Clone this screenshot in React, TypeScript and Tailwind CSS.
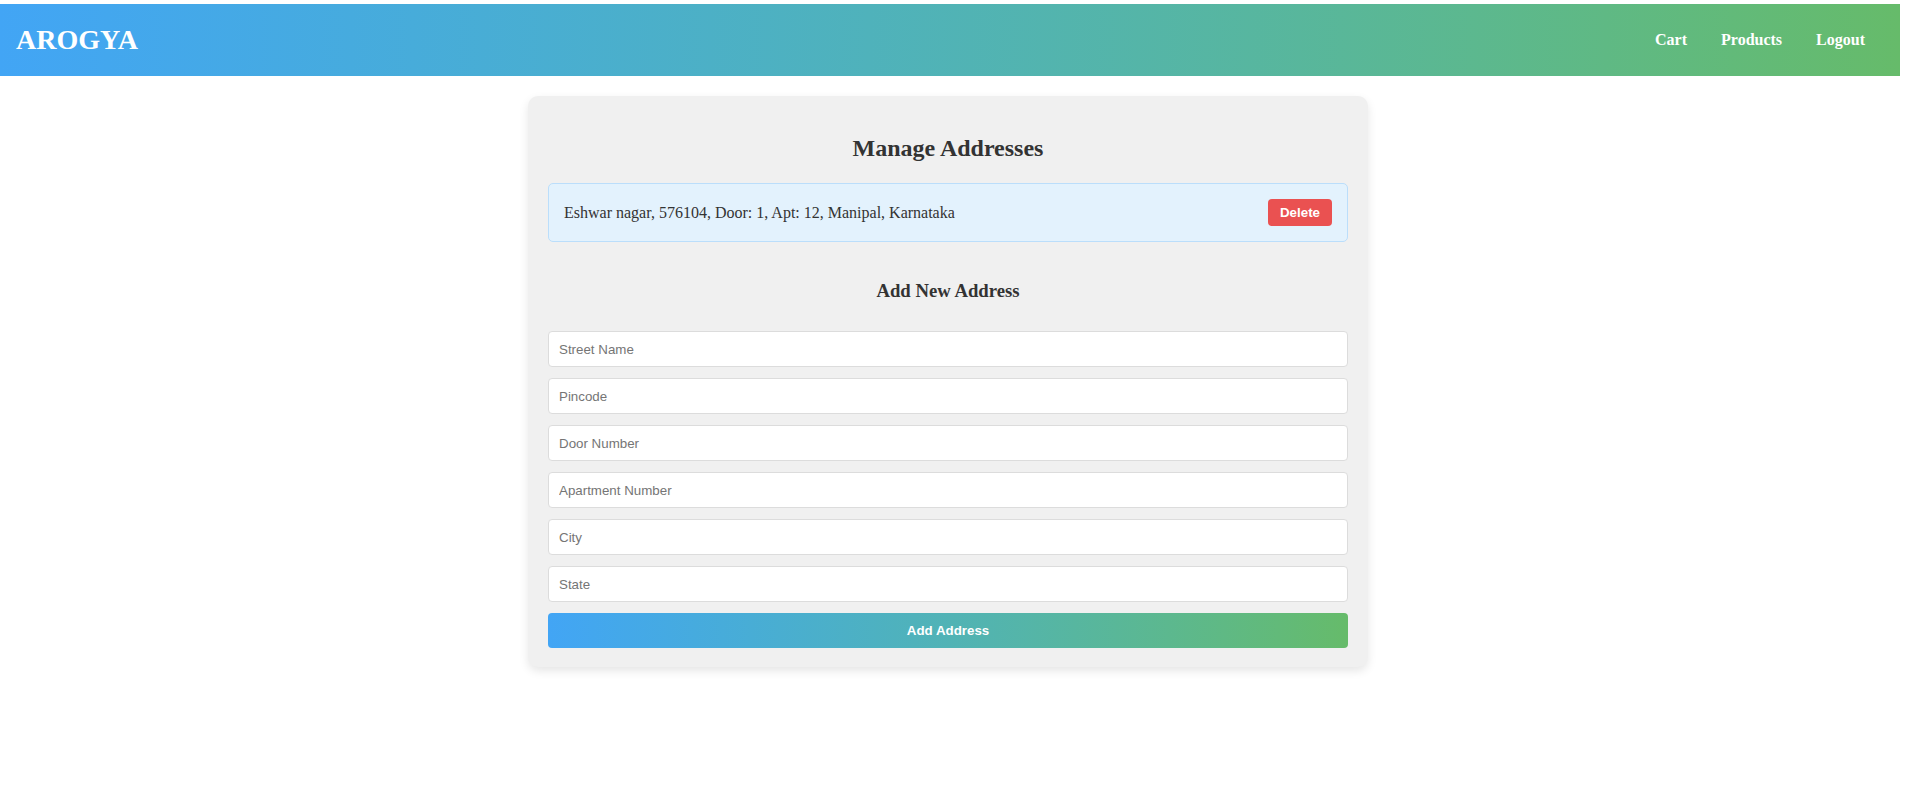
import React from "react";

const fields = ["Street Name", "Pincode", "Door Number", "Apartment Number", "City", "State"];

export default function App() {
  return (
    <div className="min-h-[802px] bg-white pt-[4px] pr-[7px]" style={{ fontFamily: '"Liberation Serif", "Times New Roman", serif' }}>
      <header className="flex h-[72px] items-center justify-between bg-gradient-to-r from-[#42a5f5] to-[#66bb6a] pl-[16px] pr-[35px]">
        <div className="text-[28px] font-bold text-white leading-none">AROGYA</div>
        <nav className="flex items-center gap-[34px] text-[16px] font-bold text-white">
          <a>Cart</a>
          <a>Products</a>
          <a>Logout</a>
        </nav>
      </header>
      <main className="flex justify-center pt-[20px]">
        <div className="ml-[-4px] w-[840px] rounded-[10px] bg-[#f0f0f0] px-[20px] pt-[18px] pb-[19px] shadow-[0_4px_10px_rgba(0,0,0,0.1)] text-[#333]">
          <h2 className="mt-[20px] mb-[21px] text-center text-[24px] font-bold leading-[28px]">Manage Addresses</h2>
          <div className="flex items-center justify-between rounded-[5px] border border-[#bbdefb] bg-[#e3f2fd] p-[15px]">
            <span className="text-[16px] text-[#333]">Eshwar nagar, 576104, Door: 1, Apt: 12, Manipal, Karnataka</span>
            <button
              className="h-[27px] rounded-[4px] bg-[#ea5151] px-[12px] text-[13.33px] font-bold text-white"
              style={{ fontFamily: '"Liberation Sans", Arial, sans-serif' }}
            >
              Delete
            </button>
          </div>
          <h3 className="mt-[38px] mb-[29px] text-center text-[18.72px] font-bold leading-[22px]">Add New Address</h3>
          <div className="flex flex-col gap-[11px]" style={{ fontFamily: '"Liberation Sans", Arial, sans-serif' }}>
            {fields.map((f) => (
              <input
                key={f}
                placeholder={f}
                className="h-[36px] w-full rounded-[4px] border border-[#dcdcdc] bg-white px-[10px] text-[13.33px] text-[#333] placeholder:text-[#757575] outline-none"
              />
            ))}
            <button className="h-[35px] w-full rounded-[4px] bg-gradient-to-r from-[#42a5f5] to-[#66bb6a] text-[13.33px] font-bold text-white">
              Add Address
            </button>
          </div>
        </div>
      </main>
    </div>
  );
}
